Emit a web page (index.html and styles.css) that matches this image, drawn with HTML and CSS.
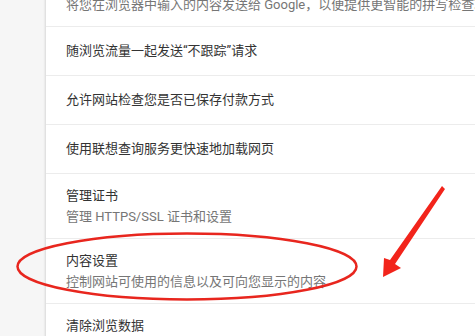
FILE: index.html
```html
<!DOCTYPE html>
<html>
   <head>
      <meta charset="UTF-8">
      <meta name="viewport" content="width=device-width, initial-scale=1.0">
      <title>高级设置</title>
      <link rel="stylesheet" href="styles.css">
   </head>
   <body>
      <div class="page">
         <div class="card">
            <div class="row two first">
               <div class="label">使用网络服务帮助解决拼写错误</div>
               <div class="sub">将您在浏览器中输入的内容发送给 Google，以便提供更智能的拼写检查功能</div>
            </div>
            <div class="row">
               <div class="label">随浏览流量一起发送“不跟踪”请求</div>
            </div>
            <div class="row">
               <div class="label">允许网站检查您是否已保存付款方式</div>
            </div>
            <div class="row">
               <div class="label">使用联想查询服务更快速地加载网页</div>
            </div>
            <div class="row two">
               <div class="label">管理证书</div>
               <div class="sub">管理 HTTPS/SSL 证书和设置</div>
            </div>
            <div class="row two">
               <div class="label">内容设置</div>
               <div class="sub">控制网站可使用的信息以及可向您显示的内容</div>
            </div>
            <div class="row two last">
               <div class="label">清除浏览数据</div>
               <div class="sub">清除浏览记录、Cookie、缓存及其他数据</div>
            </div>
         </div>
      </div>
      <!-- hand drawn marks over the screenshot -->
      <svg class="marks" width="475" height="336" viewBox="0 0 475 336">
         <ellipse cx="187" cy="266.5" rx="169.5" ry="33" fill="none" stroke="#e8261e" stroke-width="2.5"/>
         <polygon points="442,186 445,189 395,264 401,268 383,277 384,258 390,260" fill="#f2241b"/>
      </svg>
   </body>
</html>
```

FILE: styles.css
```css
body
{
   margin: 0;
   padding: 0;
   background-color: #f6f6f6;
   font-family: Roboto, "Noto Sans CJK SC", sans-serif;
   overflow: hidden;
   width: 475px;
   height: 336px;
}
.page
{
   padding-left: 46px;
}
.card
{
   background-color: #fff;
   box-shadow: -1px 0 2px rgba(0,0,0,0.12);
   margin-top: -38px;
}
.row
{
   height: 49px;
   display: flex;
   flex-direction: column;
   justify-content: center;
   padding-left: 20px;
   border-bottom: 1px solid #ececec;
   box-sizing: border-box;
   white-space: nowrap;
   overflow: hidden;
}
.row.two
{
   height: 65px;
   justify-content: flex-start;
   padding-top: 12px;
}
.row.last
{
   border-bottom: 0;
}
.label
{
   font-size: 13px;
   line-height: 20px;
   color: #333;
}
.sub
{
   font-size: 13px;
   line-height: 21px;
   color: #767676;
}
.marks
{
   position: absolute;
   left: 0;
   top: 0;
}
```
